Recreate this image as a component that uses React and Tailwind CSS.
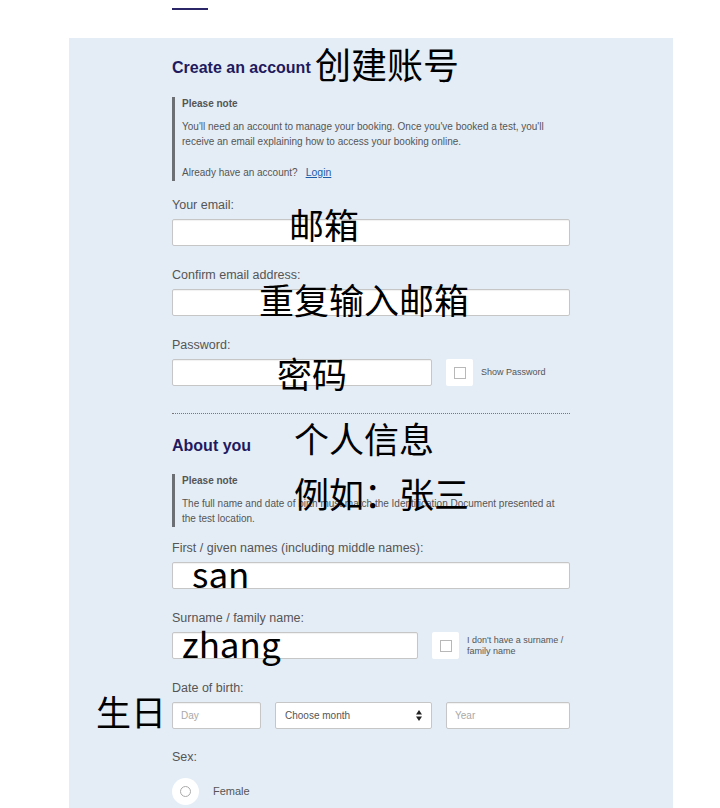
import React from "react";

const Label = ({ children, className = "" }) => (
  <label className={`block text-[12.5px] leading-[15px] text-[#555] ${className}`}>{children}</label>
);

const Field = ({ className = "", placeholder = "" }) => (
  <input
    readOnly
    placeholder={placeholder}
    className={`block h-[27px] rounded-[2px] border border-[#c6c6c6] bg-white px-[8px] text-[10px] shadow-[inset_0_1px_1px_rgba(0,0,0,0.06)] outline-none placeholder:text-[#a9a9a9] ${className}`}
  />
);

const Tick = () => (
  <div className="flex h-[27px] w-[27px] shrink-0 items-center justify-center rounded-[2px] bg-white">
    <span className="block h-[12px] w-[12px] border border-[#b8b8b8] bg-white" />
  </div>
);

const Note = ({ children, className = "" }) => (
  <div className={`border-l-[3px] border-[#6c6f74] pl-[7px] pb-[1px] text-[10px] text-[#555] ${className}`}>
    <p className="text-[10px] font-bold leading-[14px]">Please note</p>
    {children}
  </div>
);

const Scribble = ({ children, className = "" }) => (
  <span
    className={`absolute whitespace-nowrap font-['Noto_Sans_CJK_SC','Noto_Sans',sans-serif] text-[35px] leading-none text-black ${className}`}
  >
    {children}
  </span>
);

export default function App() {
  return (
    <div className="relative min-h-[808px] overflow-hidden bg-white font-['Liberation_Sans',Arial,sans-serif]">
      <div className="h-[38px] pl-[172px] pt-[8px]">
        <div className="h-[2px] w-[36px] bg-[#2b2668]" />
      </div>

      <div className="ml-[69px] w-[604px] bg-[#e4edf6] pb-[40px] pl-[103px] pt-[20px]">
        <div className="flex w-[398px] flex-col">
          <h2 className="text-[16px] font-bold leading-[20px] text-[#1f1a5e]">Create an account</h2>

          <Note className="mt-[19px]">
            <p className="mt-[8px] leading-[15px]">
              You'll need an account to manage your booking. Once you've booked a test, you'll receive an email
              explaining how to access your booking online.
            </p>
            <p className="mt-[16px] leading-[15px]">
              Already have an account?
              <a href="#" className="ml-[8px] text-[10.5px] text-[#1d5ca8] underline">
                Login
              </a>
            </p>
          </Note>

          <Label className="mt-[17px]">Your email:</Label>
          <Field className="mt-[6px] w-full" />

          <Label className="mt-[22px]">Confirm email address:</Label>
          <Field className="mt-[6px] w-full" />

          <Label className="mt-[22px]">Password:</Label>
          <div className="mt-[6px] flex items-center">
            <Field className="w-[260px]" />
            <div className="ml-[14px]">
              <Tick />
            </div>
            <span className="ml-[8px] text-[9px] text-[#555]">Show Password</span>
          </div>

          <div className="mt-[27px] border-t border-dotted border-[#777]" />

          <h2 className="mt-[22px] text-[16px] font-bold leading-[20px] text-[#1f1a5e]">About you</h2>

          <Note className="mt-[18px]">
            <p className="mt-[8px] leading-[15px]">
              The full name and date of birth must match the Identification Document presented at the test location.
            </p>
          </Note>

          <Label className="mt-[14px]">First / given names (including middle names):</Label>
          <Field className="mt-[6px] w-full" />

          <Label className="mt-[22px]">Surname / family name:</Label>
          <div className="mt-[6px] flex items-center">
            <Field className="w-[246px]" />
            <div className="ml-[14px]">
              <Tick />
            </div>
            <span className="ml-[8px] w-[100px] text-[9px] leading-[11px] text-[#555]">
              I don't have a surname / family name
            </span>
          </div>

          <Label className="mt-[22px]">Date of birth:</Label>
          <div className="mt-[6px] flex items-center">
            <Field className="w-[89px]" placeholder="Day" />
            <div className="ml-[14px] flex h-[27px] w-[158px] items-center justify-between rounded-[2px] border border-[#c6c6c6] bg-white pl-[9px] pr-[9px] text-[10px] text-[#555]">
              <span>Choose month</span>
              <svg width="6" height="11" viewBox="0 0 6 11">
                <path d="M0 4.5 L3 0 L6 4.5 Z M0 6.5 L6 6.5 L3 11 Z" fill="#222" />
              </svg>
            </div>
            <Field className="ml-[14px] w-[124px]" placeholder="Year" />
          </div>

          <Label className="mt-[21px]">Sex:</Label>
          <div className="mt-[13px] flex items-center">
            <div className="flex h-[27px] w-[27px] items-center justify-center rounded-full bg-white">
              <span className="block h-[11px] w-[11px] rounded-full border border-[#aaa]" />
            </div>
            <span className="ml-[14px] text-[11px] text-[#555]">Female</span>
          </div>
        </div>
      </div>

      <Scribble className="left-[315px] top-[45px] text-[36px]">创建账号</Scribble>
      <Scribble className="left-[289px] top-[206px]">邮箱</Scribble>
      <Scribble className="left-[259px] top-[281px]">重复输入邮箱</Scribble>
      <Scribble className="left-[277px] top-[355px]">密码</Scribble>
      <Scribble className="left-[294px] top-[420px]">个人信息</Scribble>
      <Scribble className="left-[294px] top-[475px]">例如：张三</Scribble>
      <Scribble className="left-[192px] top-[555px]">san</Scribble>
      <Scribble className="left-[182px] top-[625px]">zhang</Scribble>
      <Scribble className="left-[96px] top-[693px]">生日</Scribble>
    </div>
  );
}
